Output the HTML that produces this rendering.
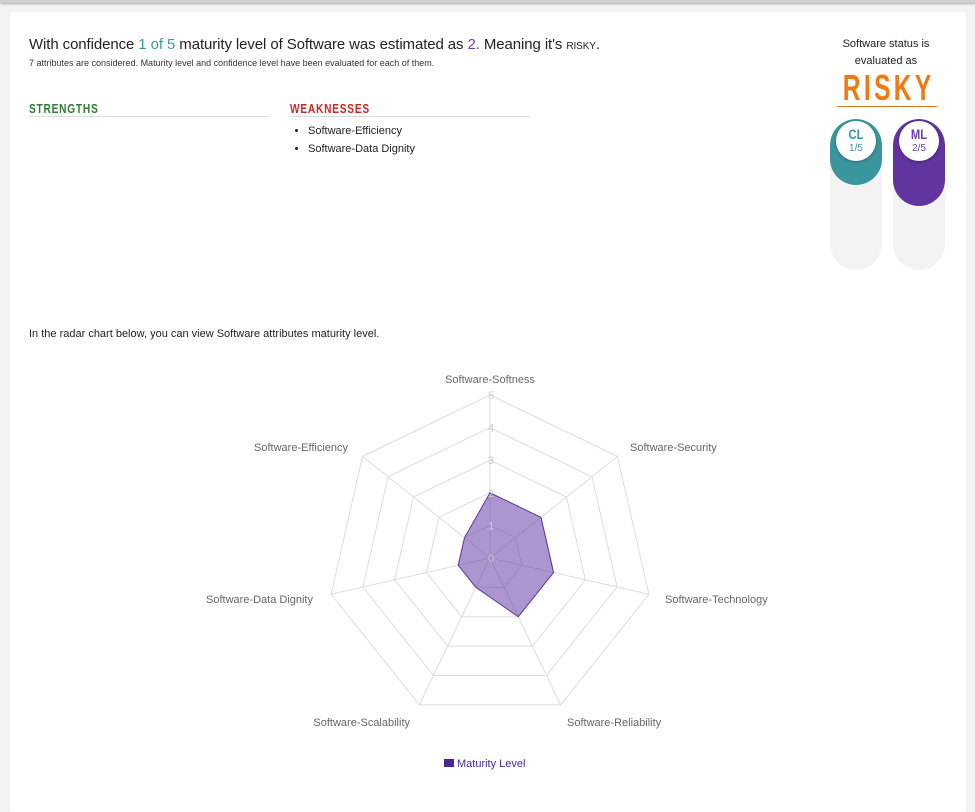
<!DOCTYPE html>
<html><head><style>
body{margin:0;width:975px;height:804px;background:#f3f3f3;font-family:"Liberation Sans",sans-serif;overflow:hidden;position:relative}
.top{position:absolute;left:0;top:0;width:975px;height:3px;background:#d0d0d0;box-shadow:0 1px 2px #aaa}
.card{position:absolute;left:10px;top:12px;width:956px;height:800px;background:#fff;border-radius:4px}
.abs{position:absolute}
h1{position:absolute;left:29px;top:36px;margin:0;font-size:15px;font-weight:normal;color:#222;letter-spacing:-0.1px}
.sub{left:29px;top:58px;font-size:9px;color:#333}
.hd{border-bottom:1px solid #ddd;width:240px;height:16px}
.hd span{display:inline-block;font-weight:bold;font-size:13px;letter-spacing:1px;transform:scaleX(.78);transform-origin:left}
ul{margin:0;padding-left:18px;font-size:11px;color:#222;line-height:18px}
.pill{position:absolute;width:52px;height:151px;top:119px;border-radius:26px;background:#f3f3f3;overflow:hidden}
.fill{position:absolute;left:0;top:0;width:100%;border-radius:26px}
.circ{position:absolute;left:6px;top:2px;width:40px;height:40px;border-radius:50%;background:#fff;text-align:center;box-shadow:0 1px 3px rgba(0,0,0,.3)}
.circ b{display:block;font-size:14px;margin-top:5px;transform:scaleX(.8)}
.circ span{display:block;font-size:10px;margin-top:1px}
</style></head><body>
<div class="top"></div>
<div class="card"></div>
<h1>With confidence <span style="color:#3a9aa3">1 of 5</span> maturity level of Software was estimated as <span style="color:#6a3fa8">2.</span> Meaning it's <span style="font-size:10px">RISKY</span>.</h1>
<div class="abs sub">7 attributes are considered. Maturity level and confidence level have been evaluated for each of them.</div>
<div class="abs hd" style="left:29px;top:100px;color:#2e7d32"><span>STRENGTHS</span></div>
<div class="abs hd" style="left:290px;top:100px;color:#c62828"><span>WEAKNESSES</span></div>
<ul class="abs" style="left:290px;top:122px"><li>Software-Efficiency</li><li>Software-Data Dignity</li></ul>
<div class="abs" style="left:820px;top:36px;width:132px;text-align:center;font-size:11px;line-height:17px;color:#222">Software status is<br>evaluated as</div>
<div class="abs" style="left:837px;top:68px;width:100px;height:38px;border-bottom:1px solid #e07a20"><div style="position:absolute;left:-50px;top:0;width:200px;text-align:center;font-weight:bold;font-size:36px;letter-spacing:5px;color:#ee7a12;line-height:40px;transform:scaleX(.68);transform-origin:center;white-space:nowrap;padding-left:5px;box-sizing:border-box">RISKY</div></div>
<div class="pill" style="left:830px"><div class="fill" style="height:66px;background:#3a969e"></div><div class="circ" style="color:#3a969e"><b>CL</b><span>1/5</span></div></div>
<div class="pill" style="left:893px"><div class="fill" style="height:87px;background:#6234a0"></div><div class="circ" style="color:#6a3fa8"><b>ML</b><span>2/5</span></div></div>
<div class="abs" style="left:29px;top:328px;font-size:11px;color:#222">In the radar chart below, you can view Software attributes maturity level.</div>
<svg class="abs" style="left:0;top:0" width="975" height="804" font-family="Liberation Sans" font-size="11">
<g fill="none" stroke="#ddd" stroke-width="1" id="g"></g>
<g id="d"></g>
<text x="490" y="383" text-anchor="middle" fill="#666">Software-Softness</text>
<text x="630" y="451" fill="#666">Software-Security</text>
<text x="665" y="603" fill="#666">Software-Technology</text>
<text x="567" y="726" fill="#666">Software-Reliability</text>
<text x="410" y="726" text-anchor="end" fill="#666">Software-Scalability</text>
<text x="313" y="603" text-anchor="end" fill="#666">Software-Data Dignity</text>
<text x="348" y="451" text-anchor="end" fill="#666">Software-Efficiency</text>
<rect x="444" y="759" width="10" height="8" fill="#4a2596"/>
<text x="457" y="767" fill="#4a2596">Maturity Level</text>
</svg>
<script>
var cx=490,cy=558,R=163,g=document.getElementById('g'),d=document.getElementById('d'),ns='http://www.w3.org/2000/svg';
function pt(k,r){var a=k*2*Math.PI/7;return [cx+r*Math.sin(a),cy-r*Math.cos(a)];}
for(var l=1;l<=5;l++){var p=[];for(var k=0;k<7;k++)p.push(pt(k,R*l/5).join(','));var e=document.createElementNS(ns,'polygon');e.setAttribute('points',p.join(' '));g.appendChild(e);}
for(var k=0;k<7;k++){var q=pt(k,R),e=document.createElementNS(ns,'line');e.setAttribute('x1',cx);e.setAttribute('y1',cy);e.setAttribute('x2',q[0]);e.setAttribute('y2',q[1]);g.appendChild(e);}
var v=[2,2,2,2,1,1,1],p=[];for(var k=0;k<7;k++)p.push(pt(k,R*v[k]/5).join(','));
var e=document.createElementNS(ns,'polygon');e.setAttribute('points',p.join(' '));e.setAttribute('fill','rgba(106,63,168,0.55)');e.setAttribute('stroke','#5a34a0');d.appendChild(e);
for(var l=0;l<=5;l++){var t=document.createElementNS(ns,'text');t.setAttribute('x',cx-2);t.setAttribute('y',cy-R*l/5+4);t.setAttribute('fill','#ccc');t.textContent=l;d.appendChild(t);}
</script>
</body></html>
